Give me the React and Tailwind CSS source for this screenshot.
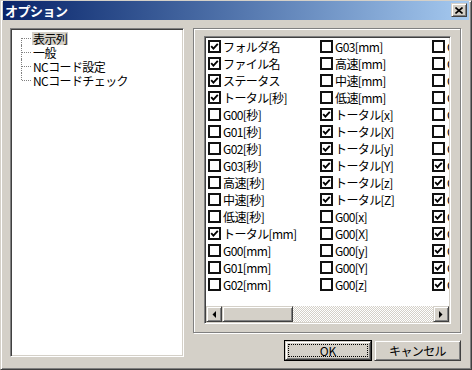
import React from 'react'

const raised =
  'border border-t-[#d4d0c8] border-l-[#d4d0c8] border-r-[#404040] border-b-[#404040] shadow-[inset_1px_1px_0_#fff,inset_-1px_-1px_0_#808080] bg-[#d4d0c8]'
const sunken =
  'border border-t-[#808080] border-l-[#808080] border-r-white border-b-white shadow-[inset_1px_1px_0_#404040,inset_-1px_-1px_0_#d4d0c8] bg-white'

const columns = [
  [
    ['フォルダ名', true],
    ['ファイル名', true],
    ['ステータス', true],
    ['トータル[秒]', true],
    ['G00[秒]', false],
    ['G01[秒]', false],
    ['G02[秒]', false],
    ['G03[秒]', false],
    ['高速[秒]', false],
    ['中速[秒]', false],
    ['低速[秒]', false],
    ['トータル[mm]', true],
    ['G00[mm]', false],
    ['G01[mm]', false],
    ['G02[mm]', false],
  ],
  [
    ['G03[mm]', false],
    ['高速[mm]', false],
    ['中速[mm]', false],
    ['低速[mm]', false],
    ['トータル[x]', true],
    ['トータル[X]', true],
    ['トータル[y]', true],
    ['トータル[Y]', true],
    ['トータル[z]', true],
    ['トータル[Z]', true],
    ['G00[x]', false],
    ['G00[X]', false],
    ['G00[y]', false],
    ['G00[Y]', false],
    ['G00[z]', false],
  ],
  [
    ['G00[Z]', false],
    ['G01[x]', false],
    ['G01[X]', false],
    ['G01[y]', false],
    ['G01[Y]', false],
    ['G01[z]', false],
    ['G01[Z]', false],
    ['G02[x]', true],
    ['G02[X]', true],
    ['G02[y]', true],
    ['G02[Y]', true],
    ['G02[z]', true],
    ['G02[Z]', true],
    ['G03[x]', true],
    ['G03[X]', true],
  ],
]

const treeItems = ['表示列', '一般', 'NCコード設定', 'NCコードチェック']

function CheckBox({ checked }) {
  return (
    <div className="w-[13px] h-[13px] flex-shrink-0 border-2 border-[#111] bg-white flex items-center justify-center">
      {checked && (
        <svg width="9" height="9" viewBox="0 0 9 9">
          <polyline points="1.2,4.2 3.4,6.6 7.8,1.8" fill="none" stroke="#000" strokeWidth="1.9" />
        </svg>
      )}
    </div>
  )
}

function Arrow({ dir }) {
  return (
    <svg width="4" height="7" viewBox="0 0 4 7">
      {dir === 'left' ? <polygon points="4,0 4,7 0.5,3.5" fill="#000" /> : <polygon points="0,0 0,7 3.5,3.5" fill="#000" />}
    </svg>
  )
}

export default function App() {
  return (
    <div className="w-[472px] h-[370px] bg-[#d4d0c8] border border-t-[#d4d0c8] border-l-[#d4d0c8] border-r-[#404040] border-b-[#404040] shadow-[inset_1px_1px_0_#fff,inset_-1px_-1px_0_#808080] px-[2px] font-['Noto_Sans_CJK_JP',sans-serif] text-[12px] text-black flex flex-col">
      {/* Title bar */}
      <div className="h-[19px] flex items-start bg-gradient-to-r from-[#0a246a] to-[#a6caf0]">
        <span className="pl-[2px] text-white font-bold text-[13px] leading-[19px] tracking-[-0.5px]">オプション</span>
        <div className="flex-1" />
        <div className={`${raised} w-[16px] h-[14px] mt-[2px] mr-[2px] flex items-center justify-center`}>
          <svg width="8" height="7" viewBox="0 0 8 7">
            <path d="M0.5 0.5 L7.5 6.5 M7.5 0.5 L0.5 6.5" stroke="#000" strokeWidth="1.6" />
          </svg>
        </div>
      </div>

      <div className="flex pl-[7px] pt-[8px] gap-[9px]">
        {/* Tree */}
        <div className={`${sunken} w-[174px] h-[329px] pt-[2px] pl-[10px]`}>
          {treeItems.map((t, i) => (
            <div key={t} className="h-[14px] flex items-center">
              <div className="relative w-[11px] h-full flex-shrink-0">
                <div
                  className={`absolute left-0 border-l border-dotted border-[#808080] ${
                    i === 0 ? 'top-[7px] bottom-0' : i === treeItems.length - 1 ? 'top-0 h-[7px]' : 'top-0 bottom-0'
                  }`}
                />
                <div className="absolute left-[1px] top-[7px] w-[9px] border-t border-dotted border-[#808080]" />
              </div>
              <span
                className={`inline-block h-[13px] px-[1px] leading-[13px] tracking-[-0.6px] whitespace-nowrap ${
                  i === 0 ? 'bg-[#d4d0c8]' : ''
                }`}
              >
                {t}
              </span>
            </div>
          ))}
        </div>

        {/* Right side */}
        <div className="flex flex-col">
          <div className="w-[268px] h-[305px] border border-[#808080] shadow-[inset_1px_1px_0_#fff,1px_1px_0_#fff] pt-[7px] pl-[10px] pr-[9px] pb-[8px]">
            <div className={`${sunken} w-full h-full p-[1px] flex flex-col`}>
              <div className="flex-1 overflow-hidden flex">
                {columns.map((col, ci) => (
                  <div key={ci} className="w-[112px] flex-shrink-0 flex flex-col">
                    {col.map(([label, checked]) => (
                      <div key={label} className="h-[17px] flex items-center pl-[2px] gap-[2px]">
                        <CheckBox checked={checked} />
                        <span className="inline-block h-[15px] whitespace-nowrap leading-[15px] tracking-[-0.6px]">
                          {label}
                        </span>
                      </div>
                    ))}
                  </div>
                ))}
              </div>
              {/* Horizontal scrollbar */}
              <div className="h-[16px] flex">
                <div className={`${raised} w-[16px] h-full flex items-center justify-center`}>
                  <Arrow dir="left" />
                </div>
                <div className={`${raised} w-[71px] h-full`} />
                <div className="flex-1 h-full bg-[repeating-conic-gradient(#fff_0_25%,#d4d0c8_0_50%)] bg-[length:2px_2px]" />
                <div className={`${raised} w-[16px] h-full flex items-center justify-center`}>
                  <Arrow dir="right" />
                </div>
              </div>
            </div>
          </div>

          {/* Buttons */}
          <div className="mt-[7px] flex justify-end gap-[2px]">
            <div className="w-[88px] h-[21px] border border-black">
              <div className={`${raised} w-full h-full p-[2px]`}>
                <div className="w-full h-full border border-dotted border-black flex items-center justify-center leading-none">
                  OK
                </div>
              </div>
            </div>
            <div className={`${raised} w-[87px] h-[21px] flex items-center justify-center leading-none tracking-[-0.6px]`}>
              キャンセル
            </div>
          </div>
        </div>
      </div>
    </div>
  )
}
